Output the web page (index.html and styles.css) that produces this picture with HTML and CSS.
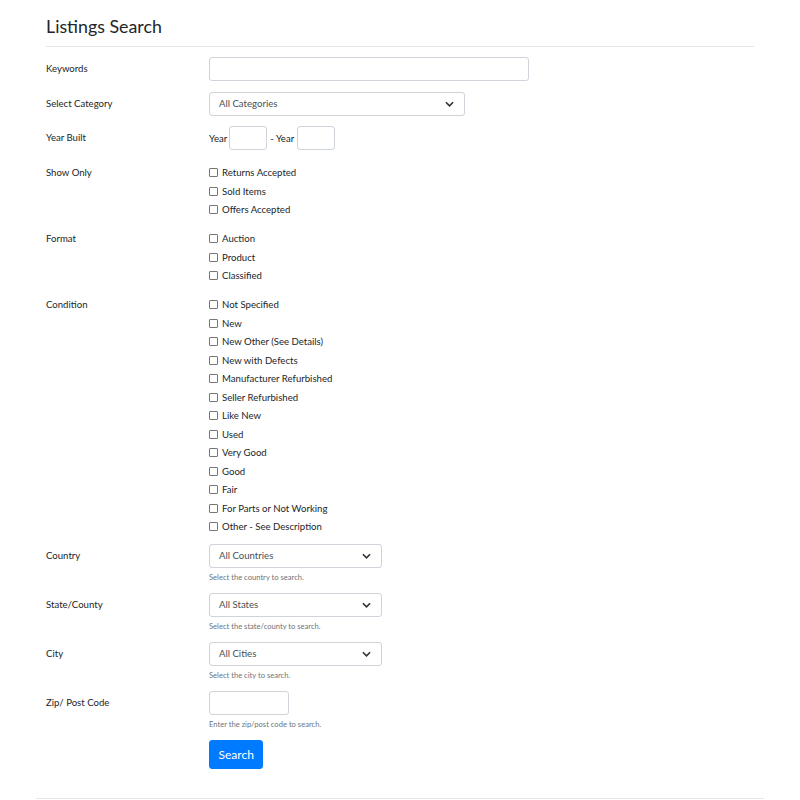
FILE: index.html
```html
<!DOCTYPE html>
<html>
<head>
<meta charset="utf-8">
<link rel="stylesheet" href="styles.css">
</head>
<body>
<div class="page">
  <h1 class="title">Listings Search</h1>
  <form class="form">
    <div class="row">
      <label class="lbl">Keywords</label>
      <div class="ctl"><input class="input kw" type="text"></div>
    </div>
    <div class="row">
      <label class="lbl">Select Category</label>
      <div class="ctl"><div class="select cat"><span>All Categories</span><svg class="chev" viewBox="0 0 10 6"><path d="M1 1l4 4 4-4" fill="none" stroke="#333" stroke-width="1.8"/></svg></div></div>
    </div>
    <div class="row">
      <label class="lbl">Year Built</label>
      <div class="ctl years"><span>Year</span><input class="input yr" type="text"><span class="dash">- Year</span><input class="input yr" type="text"></div>
    </div>
    <div class="row row-cb">
      <label class="lbl lbl-cb">Show Only</label>
      <div class="ctl checks">
        <div class="cb"><span class="box"></span>Returns Accepted</div>
        <div class="cb"><span class="box"></span>Sold Items</div>
        <div class="cb"><span class="box"></span>Offers Accepted</div>
      </div>
    </div>
    <div class="row row-cb">
      <label class="lbl lbl-cb">Format</label>
      <div class="ctl checks">
        <div class="cb"><span class="box"></span>Auction</div>
        <div class="cb"><span class="box"></span>Product</div>
        <div class="cb"><span class="box"></span>Classified</div>
      </div>
    </div>
    <div class="row row-cb">
      <label class="lbl lbl-cb">Condition</label>
      <div class="ctl checks">
        <div class="cb"><span class="box"></span>Not Specified</div>
        <div class="cb"><span class="box"></span>New</div>
        <div class="cb"><span class="box"></span>New Other (See Details)</div>
        <div class="cb"><span class="box"></span>New with Defects</div>
        <div class="cb"><span class="box"></span>Manufacturer Refurbished</div>
        <div class="cb"><span class="box"></span>Seller Refurbished</div>
        <div class="cb"><span class="box"></span>Like New</div>
        <div class="cb"><span class="box"></span>Used</div>
        <div class="cb"><span class="box"></span>Very Good</div>
        <div class="cb"><span class="box"></span>Good</div>
        <div class="cb"><span class="box"></span>Fair</div>
        <div class="cb"><span class="box"></span>For Parts or Not Working</div>
        <div class="cb"><span class="box"></span>Other - See Description</div>
      </div>
    </div>
    <div class="row">
      <label class="lbl">Country</label>
      <div class="ctl"><div class="select loc"><span>All Countries</span><svg class="chev" viewBox="0 0 10 6"><path d="M1 1l4 4 4-4" fill="none" stroke="#333" stroke-width="1.8"/></svg></div><div class="help">Select the country to search.</div></div>
    </div>
    <div class="row">
      <label class="lbl">State/County</label>
      <div class="ctl"><div class="select loc"><span>All States</span><svg class="chev" viewBox="0 0 10 6"><path d="M1 1l4 4 4-4" fill="none" stroke="#333" stroke-width="1.8"/></svg></div><div class="help">Select the state/county to search.</div></div>
    </div>
    <div class="row">
      <label class="lbl">City</label>
      <div class="ctl"><div class="select loc"><span>All Cities</span><svg class="chev" viewBox="0 0 10 6"><path d="M1 1l4 4 4-4" fill="none" stroke="#333" stroke-width="1.8"/></svg></div><div class="help">Select the city to search.</div></div>
    </div>
    <div class="row">
      <label class="lbl">Zip/ Post Code</label>
      <div class="ctl"><input class="input zip" type="text"><div class="help">Enter the zip/post code to search.</div></div>
    </div>
    <div class="row">
      <div class="lbl"></div>
      <div class="ctl"><button type="button" class="btn">Search</button></div>
    </div>
  </form>
  <div class="bottom-rule"></div>
</div>
</body>
</html>
```

FILE: styles.css
```css
* { box-sizing: border-box; }
html, body { margin: 0; padding: 0; background: #fff; }
body {
  font-family: Lato, "Open Sans", sans-serif;
  color: #212529;
  font-size: 9.6px;
}
.page { padding: 0 36px; }
.title {
  font-weight: 400;
  font-size: 17.8px;
  line-height: 22px;
  margin: 0 10px;
  padding: 15px 0 9px;
  border-bottom: 1px solid #e6e6e6;
  color: #212529;
}
.form { padding: 10px 10px 0; }
.row { display: flex; margin-bottom: 10.5px; }
.row-cb { margin-bottom: 7.5px; }
.lbl { width: 163px; flex: none; line-height: 23px; font-size: 9.6px; }
.lbl-cb { line-height: 18.5px; padding-top: 3px; }
.ctl { flex: 1; }
.input {
  display: block;
  height: 24px;
  border: 1px solid #ced4da;
  border-radius: 3px;
  background: #fff;
  font: inherit;
  padding: 0 8px;
  margin: 0;
}
.kw { width: 320px; }
.select {
  display: flex;
  align-items: center;
  justify-content: space-between;
  height: 24px;
  border: 1px solid #ced4da;
  border-radius: 3px;
  padding: 0 10px 0 9px;
  font-size: 9.6px;
  color: #495057;
}
.cat { width: 256px; }
.loc { width: 173px; }
.chev { width: 9px; height: 6px; }
.years { display: flex; align-items: center; }
.yr { width: 38px; margin-left: 2px; }
.dash { margin: 0 1px 0 3px; }
.checks { display: flex; flex-direction: column; padding-top: 3px; }
.cb { display: flex; align-items: center; height: 18.5px; }
.box {
  width: 9px; height: 9px;
  border: 1px solid #767676;
  border-radius: 1px;
  margin-right: 4px;
  background: #fff;
}
.help { font-size: 7.6px; color: #6c757d; margin-top: 4px; line-height: 10.5px; }
.zip { width: 80px; }
.btn {
  background: #007bff;
  color: #fff;
  border: 1px solid #007bff;
  border-radius: 3px;
  font: inherit;
  font-size: 12px;
  height: 29px;
  padding: 0 8.5px;
  margin: 0;
  display: block;
}
.bottom-rule { border-top: 1px solid #e6e6e6; margin-top: 29px; }
```
